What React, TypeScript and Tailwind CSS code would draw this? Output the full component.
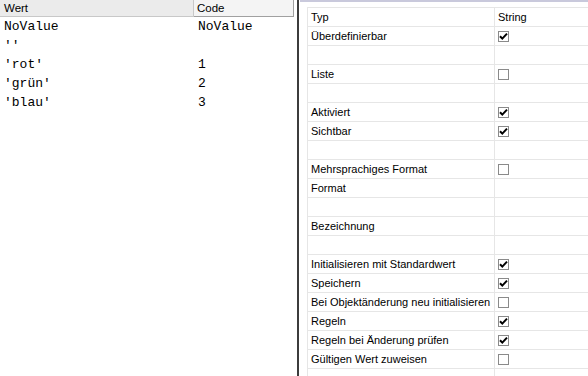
import React from "react";

const leftRows: [string, string][] = [
  ["NoValue", "NoValue"],
  ["''", ""],
  ["'rot'", "1"],
  ["'grün'", "2"],
  ["'blau'", "3"],
];

type R = { label: string; value?: string; check?: boolean };
const rightRows: R[] = [
  { label: "Typ", value: "String" },
  { label: "Überdefinierbar", check: true },
  { label: "" },
  { label: "Liste", check: false },
  { label: "" },
  { label: "Aktiviert", check: true },
  { label: "Sichtbar", check: true },
  { label: "" },
  { label: "Mehrsprachiges Format", check: false },
  { label: "Format" },
  { label: "" },
  { label: "Bezeichnung" },
  { label: "" },
  { label: "Initialisieren mit Standardwert", check: true },
  { label: "Speichern", check: true },
  { label: "Bei Objektänderung neu initialisieren", check: false },
  { label: "Regeln", check: true },
  { label: "Regeln bei Änderung prüfen", check: true },
  { label: "Gültigen Wert zuweisen", check: false },
  { label: "" },
];

function Check({ on }: { on: boolean }) {
  return (
    <div className="w-[11px] h-[11px] border border-[#8a8a8a] bg-white flex items-center justify-center">
      {on && (
        <svg width="9" height="9" viewBox="0 0 9 9">
          <path d="M1 4.2 L3.3 6.6 L8 1.6" stroke="#000" strokeWidth="2" fill="none" />
        </svg>
      )}
    </div>
  );
}

export default function App() {
  return (
    <div
      className="w-[588px] h-[376px] bg-white flex overflow-hidden text-black"
      style={{ fontFamily: '"Liberation Sans", Arial, sans-serif' }}
    >
      {/* left panel */}
      <div className="w-[297px] shrink-0 flex flex-col">
        <div className="flex h-[17px] shrink-0 text-[11.5px] leading-[16px]">
          <div className="w-[194px] bg-[#ebebeb] border-b border-r border-[#c8c8c8] pl-[4px]">Wert</div>
          <div className="w-[100px] bg-[#f4f4f4] border-b border-r border-[#a0a0a0] pl-[3px]">Code</div>
        </div>
        <div className="flex flex-col" style={{ fontFamily: '"Liberation Mono", "Courier New", monospace' }}>
          {leftRows.map(([a, b], i) => (
            <div key={i} className="flex h-[19px] shrink-0 items-center text-[13px]">
              <div className="w-[194px] pl-[4px]">{a}</div>
              <div className="pl-[4px]">{b}</div>
            </div>
          ))}
        </div>
      </div>
      {/* divider */}
      <div className="w-[2px] shrink-0 bg-[#3c3c3c]" />
      <div className="w-[1px] shrink-0" />
      {/* right panel */}
      <div className="flex-1 flex flex-col">
        <div className="h-[2px] shrink-0 bg-[#c9c9dc]" />
        <div className="h-[5px] shrink-0" />
        <div className="ml-[7px] shrink-0 border-t border-l border-[#e6e6e6] flex flex-col text-[11px]">
          {rightRows.map((r, i) => (
            <div key={i} className="flex h-[19px] shrink-0 border-b border-[#e6e6e6]">
              <div className="w-[187px] border-r border-[#e6e6e6] pl-[3px] flex items-center whitespace-nowrap overflow-hidden">
                {r.label}
              </div>
              <div className="flex-1 pl-[3px] flex items-center">
                {r.value}
                {r.check !== undefined && <Check on={r.check} />}
              </div>
            </div>
          ))}
        </div>
      </div>
    </div>
  );
}
